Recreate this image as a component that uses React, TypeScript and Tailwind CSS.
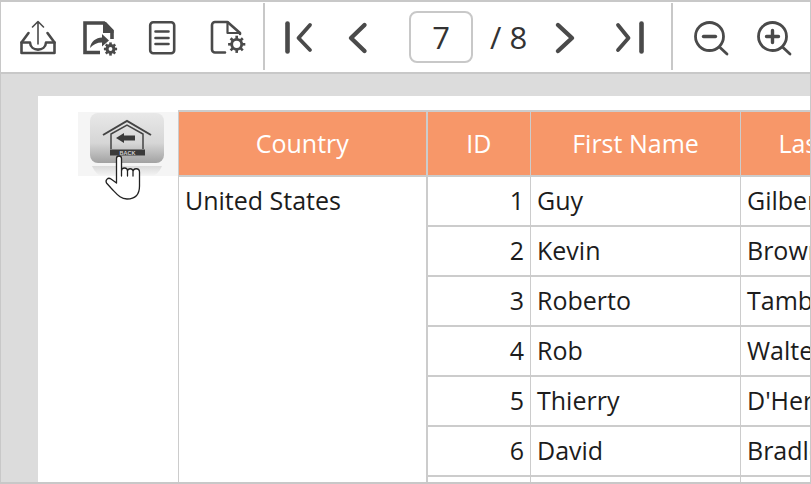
import React from 'react'

const rows = [
  { id: 1, first: 'Guy', last: 'Gilbert' },
  { id: 2, first: 'Kevin', last: 'Brown' },
  { id: 3, first: 'Roberto', last: 'Tamburello' },
  { id: 4, first: 'Rob', last: 'Walters' },
  { id: 5, first: 'Thierry', last: "D'Hers" },
  { id: 6, first: 'David', last: 'Bradley' },
]

function Gear({ cx, cy, r, w, t }: { cx: number; cy: number; r: number; w: number; t: number }) {
  const teeth = [0, 45, 90, 135, 180, 225, 270, 315]
  return (
    <g stroke="#4a4a4a" fill="none">
      <circle cx={cx} cy={cy} r={r} strokeWidth={w} />
      {teeth.map((a) => {
        const c = Math.cos((a * Math.PI) / 180)
        const s = Math.sin((a * Math.PI) / 180)
        return (
          <line
            key={a}
            x1={cx + (r + 0.4) * c}
            y1={cy + (r + 0.4) * s}
            x2={cx + (r + t) * c}
            y2={cy + (r + t) * s}
            strokeWidth={2.6}
          />
        )
      })}
    </g>
  )
}

function Icon({ children, className }: { children: React.ReactNode; className?: string }) {
  return (
    <svg width="40" height="40" viewBox="0 0 40 40" fill="none" className={className}>
      {children}
    </svg>
  )
}

function Toolbar() {
  const s = { stroke: '#4a4a4a', strokeLinecap: 'round' as const, strokeLinejoin: 'round' as const }
  return (
    <div className="flex h-[72px] w-full shrink-0 items-center border-b-2 border-[#c8c8c8] bg-white">
      <div className="flex h-full w-[262px] shrink-0 items-center pl-[17px]">
        <Icon>
          <path d="M20 27V4.500M14.500 10 20 4.500l5.500 5.500" {...s} strokeWidth={1.6} />
          <path d="M10.500 16 3.500 25.500V36h33V25.500L29.500 16" {...s} strokeWidth={2.6} />
          <path d="M3.500 25.500H12c.5 9.500 15.500 9.500 16 0h8.500" {...s} strokeWidth={2.6} />
        </Icon>
        <Icon className="ml-[22px]">
          <path d="M20 35.500H5V6h19l8 8v8" stroke="#4a4a4a" strokeWidth={3.6} />
          <path d="M23 5h3l7.500 8v3H23z" fill="#4a4a4a" />
          <path d="M10 31c1-7 6-10 12-10.500V17l7 6.500-7 6v-4c-5 0-9 2-12 5.500z" fill="#4a4a4a" />
          <Gear cx={30.500} cy={32} r={3.400} w={3} t={3.200} />
        </Icon>
        <Icon className="ml-[22px]">
          <rect x="8.200" y="5.200" width="24" height="31" rx="3" {...s} strokeWidth={2.6} />
          <path d="M13.500 14.500h13M13.500 21h13M13.500 27h13" {...s} strokeWidth={2.6} />
        </Icon>
        <Icon className="ml-[26px]">
          <path d="M17 35.500H7a3 3 0 0 1-3-3V8a3 3 0 0 1 3-3h12.500L32 16v1" {...s} strokeWidth={2.6} />
          <path d="M19.500 5v11H32" {...s} strokeWidth={2.2} />
          <Gear cx={28.700} cy={27.300} r={5} w={2.800} t={3.600} />
        </Icon>
      </div>
      <div className="mt-[1px] h-[67px] w-[2px] shrink-0 self-start bg-[#c8c8c8]" />
      <div className="flex h-full w-[406px] shrink-0 items-center">
        <Icon className="ml-[14px]">
          <path d="M8.500 6.500v28" {...s} strokeWidth={4.6} />
          <path d="M31 8 19.500 21 31 33" {...s} strokeWidth={3.800} />
        </Icon>
        <Icon className="ml-[19px]">
          <path d="M26.500 8 13 21l13.500 13" {...s} strokeWidth={4.400} />
        </Icon>
        <div className="ml-[31px] flex h-[52px] w-[64px] shrink-0 items-center justify-center rounded-[8px] border-2 border-[#c8c8c8] text-[31px] text-[#333]">
          7
        </div>
        <span className="ml-[17px] whitespace-nowrap text-[31px] text-[#333]">/ 8</span>
        <Icon className="ml-[18px]">
          <path d="M13 8l14 13-14 13" {...s} strokeWidth={4.400} />
        </Icon>
        <Icon className="ml-[23px]">
          <path d="M10 8l10.500 13L10 33" {...s} strokeWidth={3.800} />
          <path d="M33.500 6.500v28" {...s} strokeWidth={4.600} />
        </Icon>
      </div>
      <div className="mt-[1px] h-[67px] w-[2px] shrink-0 self-start bg-[#c8c8c8]" />
      <div className="flex h-full items-center pl-[18px]">
        <Icon>
          <circle cx="18.500" cy="19.500" r="14" {...s} strokeWidth={2.800} />
          <path d="M28.500 30 36 37" {...s} strokeWidth={2.800} />
          <path d="M12.500 19.500h12" {...s} strokeWidth={3.400} />
        </Icon>
        <Icon className="ml-[23px]">
          <circle cx="18.500" cy="19.500" r="14" {...s} strokeWidth={2.800} />
          <path d="M28.500 30 36 37" {...s} strokeWidth={2.800} />
          <path d="M12.500 19.500h12M18.500 13.500v12" {...s} strokeWidth={3.400} />
        </Icon>
      </div>
    </div>
  )
}

function BackImage() {
  return (
    <svg width="100" height="64" viewBox="0 0 100 64" className="shrink-0">
      <defs>
        <linearGradient id="btn" x1="0" y1="0" x2="0" y2="1">
          <stop offset="0" stopColor="#e8e8e8" />
          <stop offset="0.6" stopColor="#d6d6d6" />
          <stop offset="1" stopColor="#a2a2a2" />
        </linearGradient>
        <linearGradient id="refl" x1="0" y1="0" x2="0" y2="1">
          <stop offset="0" stopColor="#dadada" />
          <stop offset="1" stopColor="#f5f5f5" />
        </linearGradient>
      </defs>
      <rect width="100" height="64" fill="#f5f5f5" />
      <rect x="12" y="1" width="74" height="50" rx="8" fill="url(#btn)" />
      <path d="M14 54h70q-4 10-12 10H26q-8 0-12-10z" fill="url(#refl)" />
      <path d="M25 23 49 9l24 14" fill="none" stroke="#444" strokeWidth="2" />
      <path d="M33 37V22L49 13l16 9v15" fill="none" stroke="#444" strokeWidth="1.500" />
      <path d="M38 26l8-5v2.500h11v5H46V31z" fill="#3a3a3a" />
      <rect x="32" y="37.500" width="35" height="6" fill="#3a3a3a" />
      <text x="49.500" y="42.500" textAnchor="middle" fontSize="5.500" fontWeight="700" fill="#d0d0d0" fontFamily="'Liberation Sans', sans-serif">
        BACK
      </text>
    </svg>
  )
}

function Hand() {
  return (
    <svg width="45" height="52" viewBox="0 0 45 52" className="absolute left-[62px] top-[54px]">
      <path
        d="M16.500 33V8.500a2.500 2.500 0 0 1 5 0V26v-5a2.900 2.900 0 0 1 6 0v5-5a2.800 2.800 0 0 1 5.500 0v5-4a3.200 3.200 0 0 1 6.500 0v14c0 8-3.500 13-12.500 13-7 0-10-5-16-11l-4.500-5c-1.500-3 1.500-6 4.500-4z"
        fill="#fff"
        stroke="#222"
        strokeWidth="1.300"
        strokeLinejoin="round"
      />
    </svg>
  )
}

export default function App() {
  const th = 'border border-y-2 border-[#cccccc] bg-[#f79769] font-normal text-white text-center'
  const td = 'border border-y-2 border-[#cccccc] px-[6px] align-middle'
  return (
    <div
      className="flex h-screen w-full flex-col overflow-hidden border-x border-y-2 border-[#c8c8c8] bg-[#dcdcdc] text-[25px] text-[#1c1c1c]"
      style={{ fontFamily: "'Open Sans', 'Noto Sans', sans-serif" }}
    >
      <Toolbar />
      <div className="min-h-0 flex-1 overflow-hidden pl-[37px] pt-[22px]">
        <div className="relative flex h-[500px] w-[900px] items-start bg-white pl-[40px] pt-[16px]">
          <BackImage />
          <Hand />
          <table className="-mt-[2px] w-[762px] shrink-0 table-fixed border-collapse">
            <colgroup>
              <col className="w-[248px]" />
              <col className="w-[104px]" />
              <col className="w-[210px]" />
              <col className="w-[200px]" />
            </colgroup>
            <thead>
              <tr className="h-[65px]">
                <th className={th + ' border-r-2'}>Country</th>
                <th className={th}>ID</th>
                <th className={th}>First Name</th>
                <th className={th}>Last Name</th>
              </tr>
            </thead>
            <tbody>
              {rows.map((r, i) => (
                <tr key={r.id} className="h-[50px]">
                  {i === 0 && (
                    <td rowSpan={7} className={td + ' border-r-2 !align-top pt-[5px]'}>
                      United States
                    </td>
                  )}
                  <td className={td + ' text-right'}>{r.id}</td>
                  <td className={td}>{r.first}</td>
                  <td className={td + ' whitespace-nowrap'}>{r.last}</td>
                </tr>
              ))}
              <tr className="h-[50px]">
                <td className={td} />
                <td className={td} />
                <td className={td} />
              </tr>
            </tbody>
          </table>
        </div>
      </div>
    </div>
  )
}
